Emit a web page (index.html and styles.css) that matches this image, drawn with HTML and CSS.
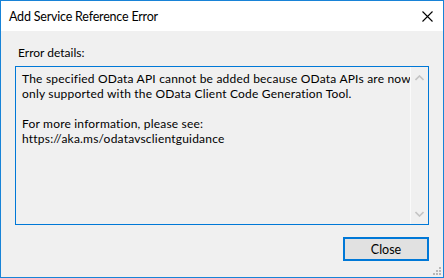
FILE: index.html
```html
<!DOCTYPE html>
<html>
<head>
    <title>Add Service Reference Error</title>
    <link rel="stylesheet" href="styles.css">
</head>
<body>

    <div class="dialog">
        <div class="titlebar">
            <span class="title">Add Service Reference Error</span>
            <svg class="close-x" width="11" height="11" viewBox="0 0 11 11">
                <path d="M0.5 0.5 L10.5 10.5 M10.5 0.5 L0.5 10.5" stroke="#000" stroke-width="1.1" fill="none"/>
            </svg>
        </div>

        <div class="content">
            <div class="label">Error details:</div>

            <div class="details">
                <div class="details-text">
                    <p>The specified OData API cannot be added because OData APIs are now<br>only supported with the OData Client Code Generation Tool.</p>
                    <p>For more information, please see:</p>
                    <p>https://aka.ms/odatavsclientguidance</p>
                </div>
                <div class="scrollbar">
                    <svg width="9" height="6" viewBox="0 0 9 6">
                        <path d="M0.5 5 L4.5 1 L8.5 5" stroke="#c4c4c4" stroke-width="1.6" fill="none"/>
                    </svg>
                    <svg width="9" height="6" viewBox="0 0 9 6">
                        <path d="M0.5 1 L4.5 5 L8.5 1" stroke="#c4c4c4" stroke-width="1.6" fill="none"/>
                    </svg>
                </div>
            </div>

            <div class="buttons">
                <button class="close-button">Close</button>
            </div>
        </div>

        <svg class="grip" width="8" height="8" viewBox="0 0 8 8">
            <rect x="6" y="0" width="2" height="2" fill="#b8b8b8"/>
            <rect x="3" y="3" width="2" height="2" fill="#b8b8b8"/>
            <rect x="6" y="3" width="2" height="2" fill="#b8b8b8"/>
            <rect x="0" y="6" width="2" height="2" fill="#b8b8b8"/>
            <rect x="3" y="6" width="2" height="2" fill="#b8b8b8"/>
            <rect x="6" y="6" width="2" height="2" fill="#b8b8b8"/>
        </svg>
    </div>

</body>
</html>
```

FILE: styles.css
```css
* {
    box-sizing: border-box;
}

body {
    margin: 0;
    padding: 0;
    background-color: #f0f0f0;
    font-family: Lato, "Liberation Sans", Arial, sans-serif;
    font-size: 12px;
    color: #000;
}

.dialog {
    position: relative;
    width: 444px;
    height: 278px;
    border: 1px solid #1883d7;
    background-color: #f0f0f0;
    display: flex;
    flex-direction: column;
}

.titlebar {
    height: 30px;
    background-color: #fff;
    display: flex;
    align-items: center;
    justify-content: space-between;
    padding: 0 10px 0 8px;
}

.title {
    font-size: 12.5px;
    letter-spacing: -0.2px;
}

.content {
    flex: 1;
    display: flex;
    flex-direction: column;
    padding: 14px 14px 0 14px;
}

.label {
    line-height: 15px;
    padding-left: 3px;
    margin-bottom: 6px;
}

.details {
    height: 159px;
    border: 1px solid #0078d7;
    display: flex;
}

.details-text {
    flex: 1;
    min-width: 0;
    overflow: hidden;
    padding: 4px 0 4px 6px;
    line-height: 15px;
    letter-spacing: 0.2px;
    white-space: nowrap;
}

.details-text p {
    margin: 0;
}

.details-text p:first-child {
    margin-bottom: 15px;
}

.scrollbar {
    flex-shrink: 0;
    width: 18px;
    border-left: 1px solid #fafafa;
    display: flex;
    flex-direction: column;
    justify-content: space-between;
    align-items: center;
    padding: 8px 0 7px 0;
}

.scrollbar svg {
    display: block;
}

.buttons {
    display: flex;
    justify-content: flex-end;
    margin-top: 12px;
}

.close-button {
    width: 86px;
    height: 24px;
    border: 2px solid #0078d7;
    background-color: #e1e1e1;
    font-family: inherit;
    font-size: 12.5px;
    padding: 0;
}

.grip {
    position: absolute;
    right: 2px;
    bottom: 2px;
}
```
